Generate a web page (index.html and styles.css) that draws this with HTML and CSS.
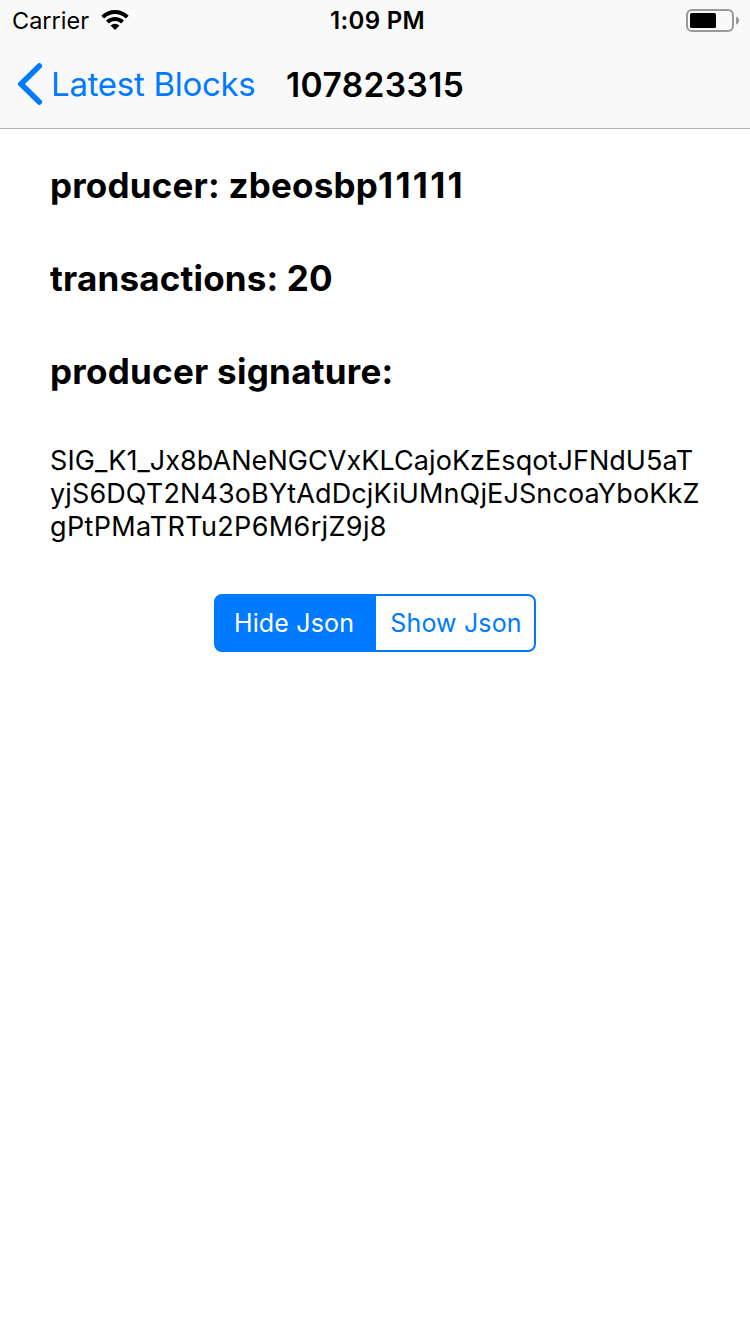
FILE: index.html
```html
<!DOCTYPE html>
<html lang="en">
<head>
<meta charset="utf-8">
<title>Block 107823315</title>
<link rel="stylesheet" href="styles.css">
</head>
<body>
<header class="header">
  <div class="status">
    <div class="status-left">
      <span class="carrier">Carrier</span>
      <svg class="wifi" width="28" height="20" viewBox="0 0 28 20"><path d="M0.300 5.700Q6 0 14 0T27.700 5.700L24.900 8.600Q20 4 14 4T3.100 8.600z"/><path d="M5 10.500Q9 7 14 7T23 10.500L20.200 13.400Q17.500 11 14 11T7.800 13.400z"/><path d="M14 20l-4.500-4.500Q11.500 13.800 14 13.800T18.500 15.500z"/></svg>
    </div>
    <span class="time">1:09 PM</span>
    <svg class="battery" width="53" height="23" viewBox="0 0 53 23"><rect x="1" y="1" width="46" height="21" rx="5" fill="none" stroke="#999" stroke-width="2"/><rect x="4" y="4" width="26" height="15" rx="1.5"/><path d="M50 7.500q3 1 3 4t-3 4z" fill="#999"/></svg>
  </div>
  <nav class="nav">
    <a class="back"><svg class="chevron" width="26" height="42" viewBox="0 0 26 42"><path d="M21.300 3L3 21l18.300 18" fill="none" stroke="#007aff" stroke-width="5.500" stroke-linecap="round"/></svg><span class="back-label">Latest Blocks</span></a>
    <h1 class="title">107823315</h1>
  </nav>
</header>
<main class="content">
  <h2 class="row producer">producer: zbeosbp<span class="ones">11111</span></h2>
  <h2 class="row count">transactions: 20</h2>
  <h2 class="row caption">producer signature:</h2>
  <p class="signature"><span class="line-a">SIG_K1_Jx8bANeNGCVxKLCajoKzEsqotJFNdU5aT</span><br><span class="line-b">yjS6DQT2N43oBYtAdDcjKiUMnQjEJSncoaYboKkZ</span><br><span class="line-c">gPtPMaTRTu2P6M6rjZ9j8</span></p>
  <div class="segments">
    <div class="segment selected">Hide Json</div>
    <div class="segment show">Show Json</div>
  </div>
</main>
</body>
</html>
```
FILE: styles.css
```css
* { box-sizing: border-box; }
body { margin: 0; height: 1334px; background: #fff; color: #000; font-family: Inter, "Liberation Sans", sans-serif; white-space: nowrap; }
h1, h2, p { margin: 0; }
svg { display: block; }
.header { height: 129px; background: #f9f9f9; border-bottom: 1px solid #b2b2b2; }
.status { height: 40px; display: grid; grid-template-columns: 330px 1fr 64px; align-items: center; font-size: 23.5px; }
.status-left { display: flex; align-items: center; padding-left: 12px; }
.carrier { width: 89px; }
.time { font-size: 24px; font-weight: 600; letter-spacing: 0.35px; padding-top: 1px; }
.nav { height: 88px; display: flex; align-items: center; padding-left: 18px; }
.back { display: flex; align-items: center; color: #007aff; font-size: 33px; letter-spacing: -0.28px; width: 268px; gap: 7px; }
.title { padding-top: 2px; font-size: 33.5px; font-weight: 600; letter-spacing: 0.4px; }
.content { padding: 10px 50px 0; }
.row { height: 93px; line-height: 93px; font-size: 35px; font-weight: 700; }
.producer { letter-spacing: 0.2px; }
.ones { letter-spacing: 2.3px; }
.count { letter-spacing: 0.18px; }
.caption { letter-spacing: 0.26px; }
.signature { margin-top: 26px; font-size: 27px; line-height: 33px; }
.line-a { letter-spacing: 0.06px; }
.line-b { letter-spacing: 0.12px; }
.line-c { letter-spacing: 0.35px; }
.segments { width: 322px; height: 58px; margin: 51px auto 0; border: 2px solid #007aff; border-radius: 8px; display: grid; grid-template-columns: 160px 1fr; overflow: hidden; background: linear-gradient(to right, #007aff 160px, #fff 160px) border-box; color: #007aff; font-size: 25px; letter-spacing: 0.15px; }
.segment { display: flex; align-items: center; justify-content: center; }
.selected { background: #007aff; color: #fff; padding-right: 4px; }
.show { padding-left: 2px; }
```
